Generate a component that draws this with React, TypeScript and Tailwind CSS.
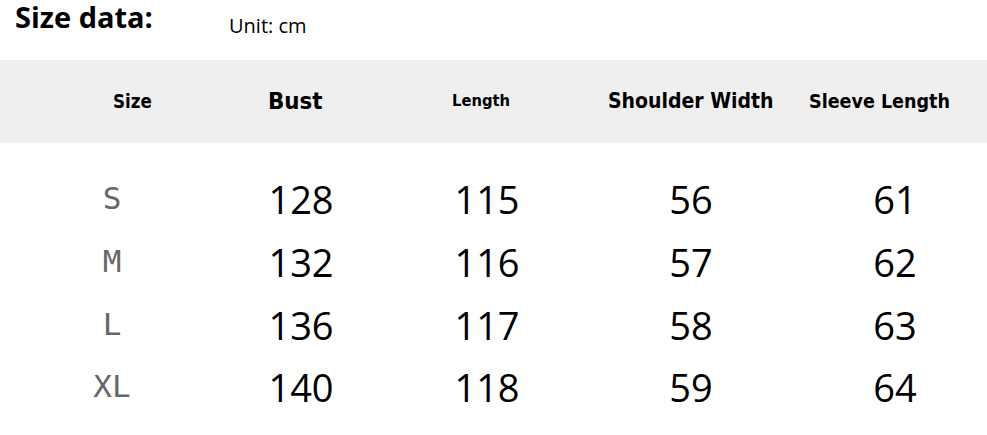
export default function App() {
  const rows = [
    ["S", "128", "115", "56", "61"],
    ["M", "132", "116", "57", "62"],
    ["L", "136", "117", "58", "63"],
    ["XL", "140", "118", "59", "64"],
  ];
  const heights = ["h-[63px]", "h-[63px]", "h-[63px]", "h-[61px]"];
  const narrow = { fontFamily: '"DejaVu Sans Condensed", "DejaVu Sans", sans-serif' };
  const open = { fontFamily: '"Open Sans", sans-serif' };
  return (
    <div className="w-[987px] h-[435px] bg-white overflow-hidden relative">
      <div className="flex h-[42px] pt-[2px]">
        <div className="pl-[15px] w-[229px] shrink-0 text-[29px] font-bold leading-[30px] text-black" style={open}>
          Size data:
        </div>
        <div className="pt-[12px] text-[20px] leading-[24px] text-black" style={open}>
          Unit: cm
        </div>
      </div>
      <div className="mt-[18px] h-[83px] bg-[#efefef] flex items-center font-bold text-black" style={narrow}>
        <div className="w-[264px] shrink-0 pl-[113px] text-[18.6px]">Size</div>
        <div className="w-[187px] shrink-0 pl-[4px] text-[23.8px]">Bust</div>
        <div className="w-[157px] shrink-0 pl-[1px] text-[16.4px]">Length</div>
        <div className="w-[201px] shrink-0 text-[21px]">Shoulder Width</div>
        <div className="shrink-0 text-[19.5px]">Sleeve Length</div>
      </div>
      <div className="pt-[25px]">
        {rows.map((r, i) => (
          <div key={i} className={`flex items-center ${heights[i]}`}>
            <div className="w-[224px] shrink-0 flex justify-center pb-[3px] text-[#666666] text-[31px] leading-none" style={{ fontFamily: '"DejaVu Sans Mono", monospace' }}>{r[0]}</div>
            {r.slice(1).map((v, j) => (
              <div key={j} className={`shrink-0 flex justify-center text-[38px] text-black ${["w-[154px]", "w-[218px]", "w-[190px]", "w-[218px]"][j]}`} style={open}>
                {v}
              </div>
            ))}
          </div>
        ))}
      </div>
    </div>
  );
}
